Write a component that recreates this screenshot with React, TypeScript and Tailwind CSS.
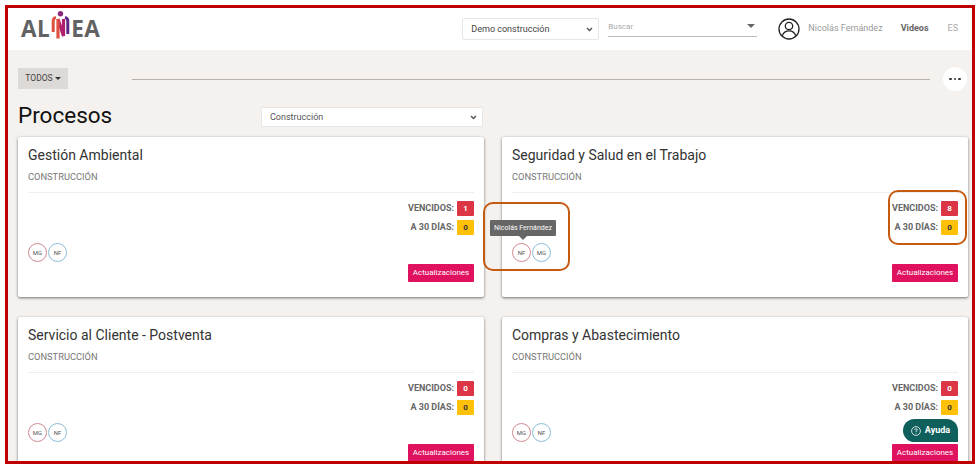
const font = { fontFamily: "Roboto, 'Liberation Sans', sans-serif" };

const Logo = () => (
  <div className="flex items-center font-['Open_Sans'] text-[22.5px] font-bold leading-none tracking-[0.5px] text-[#626262]">
    <span>AL</span>
    <svg width="19" height="29" viewBox="0 0 19 29" className="mx-[1px] -mt-[7px]">
      <circle cx="9.5" cy="2.8" r="2.7" fill="#8a2a78" />
      <path d="M2.2 21 V10 Q2.2 7 5 6.4" stroke="#e0503f" strokeWidth="3" fill="none" />
      <path d="M16.8 23 V10 Q16.8 7 14 6.4" stroke="#5b2a86" strokeWidth="3" fill="none" />
      <path d="M7 8 L12.5 25 V8" stroke="#b01f6b" strokeWidth="3.2" fill="none" />
      <path d="M7 8 V27.5" stroke="#e0503f" strokeWidth="3.2" fill="none" />
    </svg>
    <span>EA</span>
  </div>
);

const Chevron = () => (
  <svg width="7" height="5" viewBox="0 0 7 5" className="shrink-0">
    <path d="M1 1 L3.5 3.6 L6 1" stroke="#555" strokeWidth="1.4" fill="none" />
  </svg>
);

const Avatar = ({ text, color }: { text: string; color: string }) => (
  <div
    className={`flex h-[19px] w-[19px] items-center justify-center rounded-full border text-[6px] text-[#555] ${color}`}
  >
    {text}
  </div>
);

type CardProps = {
  title: string;
  overdue: string;
  people: string[];
  tooltip?: boolean;
};

const Card = ({ title, overdue, people, tooltip }: CardProps) => (
  <div className="relative h-[160px] rounded-[2px] bg-white px-[10px] pt-[10px] shadow-[0_1px_3px_rgba(0,0,0,0.55)]">
    <h3 className="text-[14px] leading-[16px] text-[#333]">{title}</h3>
    <p className="mt-[8px] text-[9.3px] leading-[12px] text-[#777]">CONSTRUCCIÓN</p>
    <div className="mt-[9px] border-t border-[#eee]" />

    <div className="mt-[8px] flex flex-col items-end gap-[4px] text-[9px] font-bold text-[#666]">
      <div className="flex items-center gap-[3px]">
        <span>VENCIDOS:</span>
        <span className="flex h-[15px] w-[17px] items-center justify-center rounded-[1px] bg-[#dc3545] text-[8px] text-white">
          {overdue}
        </span>
      </div>
      <div className="flex items-center gap-[3px]">
        <span>A 30 DÍAS:</span>
        <span className="flex h-[15px] w-[17px] items-center justify-center rounded-[1px] bg-[#ffc107] text-[8px] text-[#333]">
          0
        </span>
      </div>
    </div>

    <div className="mt-[8px] flex gap-[1px]">
      <Avatar text={people[0]} color="border-[#d08a92]" />
      <Avatar text={people[1]} color="border-[#8dbcd8]" />
    </div>

    <div className="mt-[2px] flex justify-end">
      <button className="h-[18px] w-[66px] rounded-[1px] bg-[#e0115f] text-[8px] font-normal text-white">
        Actualizaciones
      </button>
    </div>

    {tooltip && (
      <div className="absolute left-[-12px] top-[83px] flex h-[16px] w-[66px] items-center justify-center rounded-[1px] bg-[#666] text-[7px] text-white">
        Nicolás Fernández
        <span className="absolute bottom-[-4px] left-[29px] h-0 w-0 border-x-[4px] border-t-[4px] border-x-transparent border-t-[#666]" />
      </div>
    )}
  </div>
);

export default function App() {
  return (
    <div className="h-[469px] w-[979px] overflow-hidden bg-white pl-[5px] pr-[4px] pt-[5px]" style={font}>
      <div className="relative h-[459px] overflow-hidden border-[3px] border-[#c00000] bg-[#f4f1ee]">
        {/* Header */}
        <header className="flex h-[42px] items-center bg-white pl-[13px] pr-[14px]">
          <Logo />
          <div className="ml-auto flex h-[22px] w-[137px] items-center justify-between rounded-[2px] border border-[#e6e6e6] bg-white pl-[8px] pr-[5px] pt-[1px] text-[9px] text-[#444]">
            Demo construcción
            <Chevron />
          </div>
          <div className="mb-[4px] ml-[9px] flex h-[19px] w-[149px] items-start justify-between border-b border-[#bbb] pr-[2px] pt-[3px] text-[8px] text-[#aaa]">
            Buscar
            <span className="mt-[3px] h-0 w-0 border-x-[4px] border-t-[4px] border-x-transparent border-t-[#666]" />
          </div>
          <svg width="22" height="22" viewBox="0 0 22 22" fill="none" stroke="#222" strokeWidth="1.3" className="ml-[21px]">
            <circle cx="11" cy="11" r="10" />
            <circle cx="11" cy="8" r="3.7" />
            <path d="M4.3 17.8 C5.5 14 8 12.8 11 12.8 C14 12.8 16.5 14 17.7 17.8" />
          </svg>
          <span className="ml-[8px] text-[9px] text-[#999]">Nicolás Fernández</span>
          <span className="ml-[18px] text-[9px] font-bold text-[#666]">Videos</span>
          <span className="ml-[19px] text-[9px] text-[#aaa]">ES</span>
        </header>

        <main className="px-[10px] pt-[17px]">
          {/* Toolbar */}
          <div className="flex h-[24px] w-[949px] items-center">
            <button className="-mt-[2px] flex h-[21px] w-[50px] shrink-0 items-center justify-center gap-[2px] bg-[#dcd9d6] text-[8.5px] text-[#444]">
              TODOS
              <span className="h-0 w-0 border-x-[3px] border-t-[3px] border-x-transparent border-t-[#333]" />
            </button>
            <div className="ml-[64px] w-[798px] shrink-0 border-t border-[#b5b0aa]" />
            <button className="ml-[13px] flex h-[24px] w-[24px] shrink-0 items-center justify-center gap-[2px] rounded-full bg-white">
              <span className="h-[2.5px] w-[2.5px] rounded-full bg-[#333]" />
              <span className="h-[2.5px] w-[2.5px] rounded-full bg-[#333]" />
              <span className="h-[2.5px] w-[2.5px] rounded-full bg-[#333]" />
            </button>
          </div>

          {/* Title */}
          <div className="mt-[16px] flex h-[20px] items-center">
            <h1 className="w-[243px] -translate-y-[2px] text-[22.5px] leading-[20px] text-[#111]">Procesos</h1>
            <div className="flex h-[20px] w-[222px] items-center justify-between rounded-[1px] border border-[#e6e6e6] bg-white pl-[8px] pr-[5px] pt-[1px] text-[9px] text-[#555]">
              Construcción
              <Chevron />
            </div>
          </div>

          {/* Cards */}
          <div className="mt-[10px] grid w-[950px] grid-cols-[466px_466px] gap-x-[18px] gap-y-[20px]">
            <Card title="Gestión Ambiental" overdue="1" people={["MG", "NF"]} />
            <Card title="Seguridad y Salud en el Trabajo" overdue="8" people={["NF", "MG"]} tooltip />
            <Card title="Servicio al Cliente - Postventa" overdue="0" people={["MG", "NF"]} />
            <Card title="Compras y Abastecimiento" overdue="0" people={["MG", "NF"]} />
          </div>
        </main>

        {/* Annotations */}
        <div className="absolute left-[475px] top-[194px] h-[69px] w-[87px] rounded-[10px] border-[2.5px] border-[#c55a11]" />
        <div className="absolute left-[880px] top-[182px] h-[55px] w-[79px] rounded-[10px] border-[2.5px] border-[#c55a11]" />

        {/* Help */}
        <button className="absolute left-[895px] top-[411px] flex h-[23px] w-[55px] items-center justify-center gap-[4px] rounded-full rounded-br-[4px] bg-[#0f5f5c] text-[9px] font-bold text-white">
          <svg width="10" height="10" viewBox="0 0 10 10" fill="none" stroke="#fff" strokeWidth="0.8">
            <circle cx="5" cy="5" r="4.4" />
            <path d="M3.6 3.9 Q3.7 2.7 5 2.7 Q6.4 2.7 6.4 3.8 Q6.4 4.5 5 5.2 V6" />
            <path d="M5 6.8 V7.5" />
          </svg>
          Ayuda
        </button>
      </div>
    </div>
  );
}
